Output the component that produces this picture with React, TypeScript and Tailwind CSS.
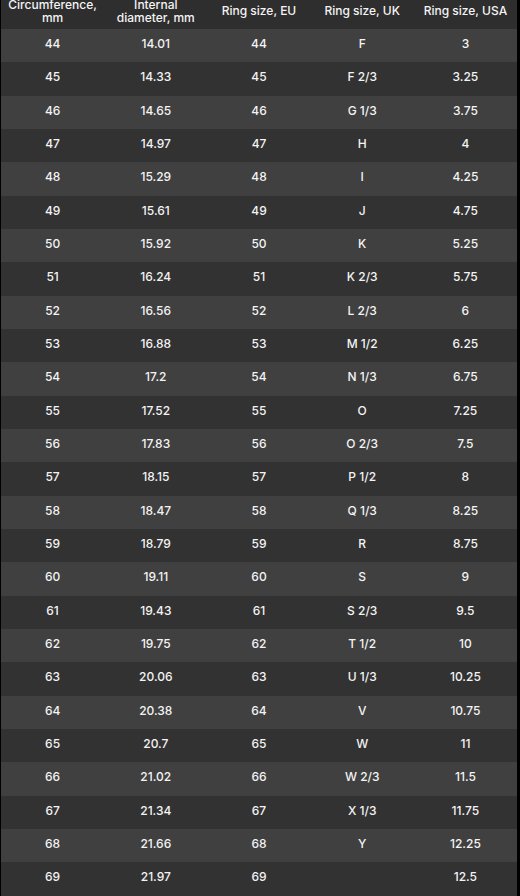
const rows: [string, string, string, string, string][] = [
  ["44", "14.01", "44", "F", "3"],
  ["45", "14.33", "45", "F 2/3", "3.25"],
  ["46", "14.65", "46", "G 1/3", "3.75"],
  ["47", "14.97", "47", "H", "4"],
  ["48", "15.29", "48", "I", "4.25"],
  ["49", "15.61", "49", "J", "4.75"],
  ["50", "15.92", "50", "K", "5.25"],
  ["51", "16.24", "51", "K 2/3", "5.75"],
  ["52", "16.56", "52", "L 2/3", "6"],
  ["53", "16.88", "53", "M 1/2", "6.25"],
  ["54", "17.2", "54", "N 1/3", "6.75"],
  ["55", "17.52", "55", "O", "7.25"],
  ["56", "17.83", "56", "O 2/3", "7.5"],
  ["57", "18.15", "57", "P 1/2", "8"],
  ["58", "18.47", "58", "Q 1/3", "8.25"],
  ["59", "18.79", "59", "R", "8.75"],
  ["60", "19.11", "60", "S", "9"],
  ["61", "19.43", "61", "S 2/3", "9.5"],
  ["62", "19.75", "62", "T 1/2", "10"],
  ["63", "20.06", "63", "U 1/3", "10.25"],
  ["64", "20.38", "64", "V", "10.75"],
  ["65", "20.7", "65", "W", "11"],
  ["66", "21.02", "66", "W 2/3", "11.5"],
  ["67", "21.34", "67", "X 1/3", "11.75"],
  ["68", "21.66", "68", "Y", "12.25"],
  ["69", "21.97", "69", "", "12.5"],
];

const headers = [
  ["Circumference,", "mm"],
  ["Internal", "diameter, mm"],
  ["Ring size, EU"],
  ["Ring size, UK"],
  ["Ring size, USA"],
];

const App = () => {
  return (
    <div className="min-h-screen w-[520px] bg-black overflow-hidden font-['Inter',sans-serif] text-[12px] font-medium text-[#f4f4f4]">
      <div className="ml-px w-[516px] -mt-[7px]">
        <div className="grid grid-cols-5 h-[36px] bg-[#2e2e2e]">
          {headers.map((h, i) => (
            <div key={i} className="flex flex-col items-center justify-center leading-[13.5px] text-center">
              {h.map((line) => (
                <span key={line}>{line}</span>
              ))}
            </div>
          ))}
        </div>
        {rows.map((r, i) => (
          <div
            key={r[0]}
            className={`grid grid-cols-5 h-[33.33px] items-center pb-[3px] ${i % 2 === 0 ? "bg-[#404040]" : "bg-[#323232]"}`}
          >
            {r.map((c, j) => (
              <p key={j} className="text-center">{c}</p>
            ))}
          </div>
        ))}
      </div>
    </div>
  );
};

export default App;
